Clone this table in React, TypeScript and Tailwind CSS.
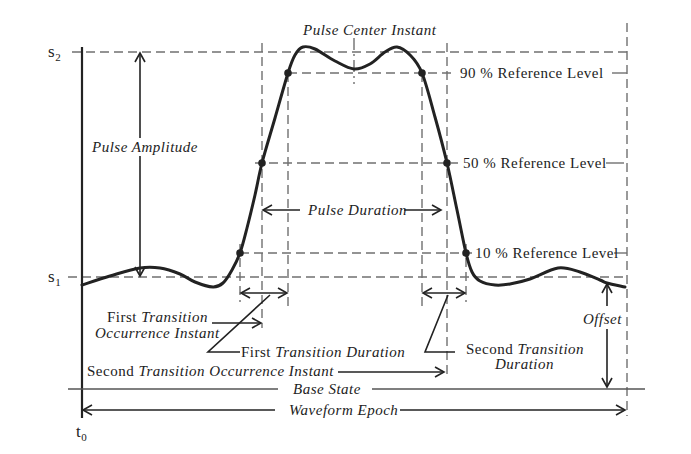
import React from "react";

type P = [number, number];

function smoothPath(pts: P[]): string {
  let d = `M ${pts[0][0]} ${pts[0][1]}`;
  for (let i = 0; i < pts.length - 1; i++) {
    const p0 = pts[i - 1] || pts[i];
    const p1 = pts[i];
    const p2 = pts[i + 1];
    const p3 = pts[i + 2] || p2;
    const c1x = p1[0] + (p2[0] - p0[0]) / 6;
    const c1y = p1[1] + (p2[1] - p0[1]) / 6;
    const c2x = p2[0] - (p3[0] - p1[0]) / 6;
    const c2y = p2[1] - (p3[1] - p1[1]) / 6;
    d += ` C ${c1x.toFixed(1)} ${c1y.toFixed(1)} ${c2x.toFixed(1)} ${c2y.toFixed(1)} ${p2[0]} ${p2[1]}`;
  }
  return d;
}

const wave: P[] = [
  [82, 285], [110, 276], [140, 268], [160, 268], [180, 274], [195, 282], [213, 287],
  [223, 283], [232, 270], [240, 253], [247, 228], [255, 195], [262, 163], [275, 118],
  [288, 73], [295, 55], [303, 47], [315, 49], [335, 61], [354, 69], [370, 64], [385, 52],
  [397, 47], [410, 55], [422, 73], [435, 117], [447, 163], [457, 210], [466, 253],
  [472, 272], [480, 281], [495, 285], [510, 284], [530, 279], [558, 268], [580, 272],
  [600, 280], [607, 283], [625, 287],
];

const DASH = "#707070";
const INK = "#222";

function Head({ x, y, dir }: { x: number; y: number; dir: "l" | "r" | "u" | "d" }) {
  const L = 9;
  const W = 5;
  let pts = "";
  if (dir === "r") pts = `${x - L},${y - W} ${x},${y} ${x - L},${y + W}`;
  if (dir === "l") pts = `${x + L},${y - W} ${x},${y} ${x + L},${y + W}`;
  if (dir === "u") pts = `${x - W},${y + L} ${x},${y} ${x + W},${y + L}`;
  if (dir === "d") pts = `${x - W},${y - L} ${x},${y} ${x + W},${y - L}`;
  return <polyline points={pts} fill="none" stroke={INK} strokeWidth={1.6} />;
}

function HD({ x1, x2, y }: { x1: number; x2: number; y: number }) {
  return <line x1={x1} y1={y} x2={x2} y2={y} stroke={DASH} strokeWidth={1.4} strokeDasharray="9 5" />;
}
function VD({ x, y1, y2 }: { x: number; y1: number; y2: number }) {
  return <line x1={x} y1={y1} x2={x} y2={y2} stroke={DASH} strokeWidth={1.4} strokeDasharray="9 5" />;
}
function S({ x1, y1, x2, y2, w = 1.6 }: { x1: number; y1: number; x2: number; y2: number; w?: number }) {
  return <line x1={x1} y1={y1} x2={x2} y2={y2} stroke={INK} strokeWidth={w} />;
}

export default function App() {
  return (
    <div className="w-[691px] h-[454px] bg-white">
      <svg
        width={691}
        height={454}
        viewBox="0 0 691 454"
        className="block font-['Liberation_Serif',serif] text-[15px] tracking-[0.5px]"
        fill={INK}
      >
        {/* horizontal dashed levels */}
        <HD x1={72} x2={627} y={52} />
        <HD x1={288} x2={452} y={73} />
        <line x1={612} y1={73} x2={627} y2={73} stroke={DASH} strokeWidth={1.4} />
        <HD x1={255} x2={458} y={163} />
        <line x1={606} y1={163} x2={624} y2={163} stroke={DASH} strokeWidth={1.4} />
        <HD x1={240} x2={472} y={253} />
        <line x1={614} y1={253} x2={627} y2={253} stroke={DASH} strokeWidth={1.4} />
        <HD x1={68} x2={627} y={277} />

        {/* vertical dashed */}
        <VD x={262} y1={43} y2={328} />
        <VD x={288} y1={73} y2={308} />
        <VD x={240} y1={244} y2={302} />
        <line x1={354} y1={38} x2={354} y2={84} stroke={DASH} strokeWidth={1.4} strokeDasharray="12 4 2 4" />
        <VD x={422} y1={73} y2={310} />
        <VD x={447} y1={43} y2={376} />
        <VD x={466} y1={244} y2={302} />
        <VD x={627} y1={23} y2={416} />

        {/* axis */}
        <S x1={82} y1={47} x2={82} y2={418} w={2.2} />

        {/* base state */}
        <line x1={68} y1={389} x2={278} y2={389} stroke="#555" strokeWidth={1.6} />
        <line x1={372} y1={389} x2={645} y2={389} stroke="#555" strokeWidth={1.6} />

        {/* waveform */}
        <path d={smoothPath(wave)} fill="none" stroke={INK} strokeWidth={3} strokeLinejoin="round" strokeLinecap="round" />
        {[
          [240, 253], [262, 163], [288, 73], [422, 73], [447, 163], [466, 253],
        ].map(([x, y]) => (
          <circle key={`${x}-${y}`} cx={x} cy={y} r={3.8} fill={INK} />
        ))}

        {/* pulse amplitude arrow */}
        <S x1={140} y1={53} x2={140} y2={138} />
        <S x1={140} y1={156} x2={140} y2={276} />
        <Head x={140} y={53} dir="u" />
        <Head x={140} y={276} dir="d" />

        {/* pulse duration */}
        <S x1={300} y1={210} x2={263} y2={210} />
        <Head x={263} y={210} dir="l" />
        <S x1={404} y1={210} x2={441} y2={210} />
        <Head x={441} y={210} dir="r" />

        {/* transition durations */}
        <S x1={241} y1={293} x2={287} y2={293} />
        <Head x={241} y={293} dir="l" />
        <Head x={287} y={293} dir="r" />
        <S x1={423} y1={293} x2={465} y2={293} />
        <Head x={423} y={293} dir="l" />
        <Head x={465} y={293} dir="r" />

        {/* leaders */}
        <polyline points="270,295 208,352 240,352" fill="none" stroke={INK} strokeWidth={1.6} />
        <polyline points="448,295 425,352 455,352" fill="none" stroke={INK} strokeWidth={1.6} />
        <S x1={212} y1={323} x2={261} y2={323} />
        <Head x={261} y={323} dir="r" />
        <S x1={338} y1={372} x2={444} y2={372} />
        <Head x={444} y={372} dir="r" />

        {/* offset */}
        <S x1={607} y1={284} x2={607} y2={306} />
        <Head x={607} y={284} dir="u" />
        <S x1={607} y1={329} x2={607} y2={387} />
        <Head x={607} y={387} dir="d" />

        {/* waveform epoch */}
        <S x1={83} y1={410} x2={275} y2={410} />
        <Head x={83} y={410} dir="l" />
        <S x1={400} y1={410} x2={625} y2={410} />
        <Head x={625} y={410} dir="r" />

        {/* texts */}
        <text x={48} y={57} className="text-[17px]">
          s<tspan fontSize={11} dy={4}>2</tspan>
        </text>
        <text x={48} y={282} className="text-[17px]">
          s<tspan fontSize={11} dy={4}>1</tspan>
        </text>
        <text x={76} y={437} className="text-[17px]">
          t<tspan fontSize={11} dy={4}>0</tspan>
        </text>

        <text x={303} y={35} fontStyle="italic">Pulse Center Instant</text>
        <text x={460} y={78}>90 % Reference Level</text>
        <text x={463} y={168}>50 % Reference Level</text>
        <text x={475} y={258}>10 % Reference Level</text>
        <text x={92} y={152} fontStyle="italic">Pulse Amplitude</text>
        <text x={308} y={215} fontStyle="italic">Pulse Duration</text>
        <text x={107} y={322}>
          First <tspan fontStyle="italic">Transition</tspan>
        </text>
        <text x={95} y={338} fontStyle="italic">Occurrence Instant</text>
        <text x={241} y={357}>
          First <tspan fontStyle="italic">Transition Duration</tspan>
        </text>
        <text x={87} y={376}>
          Second <tspan fontStyle="italic">Transition Occurrence Instant</tspan>
        </text>
        <text x={466} y={354}>
          Second <tspan fontStyle="italic">Transition</tspan>
        </text>
        <text x={495} y={369} fontStyle="italic">Duration</text>
        <text x={583} y={324} fontStyle="italic">Offset</text>
        <text x={293} y={394} fontStyle="italic">Base State</text>
        <text x={289} y={415} fontStyle="italic">Waveform Epoch</text>
      </svg>
    </div>
  );
}
